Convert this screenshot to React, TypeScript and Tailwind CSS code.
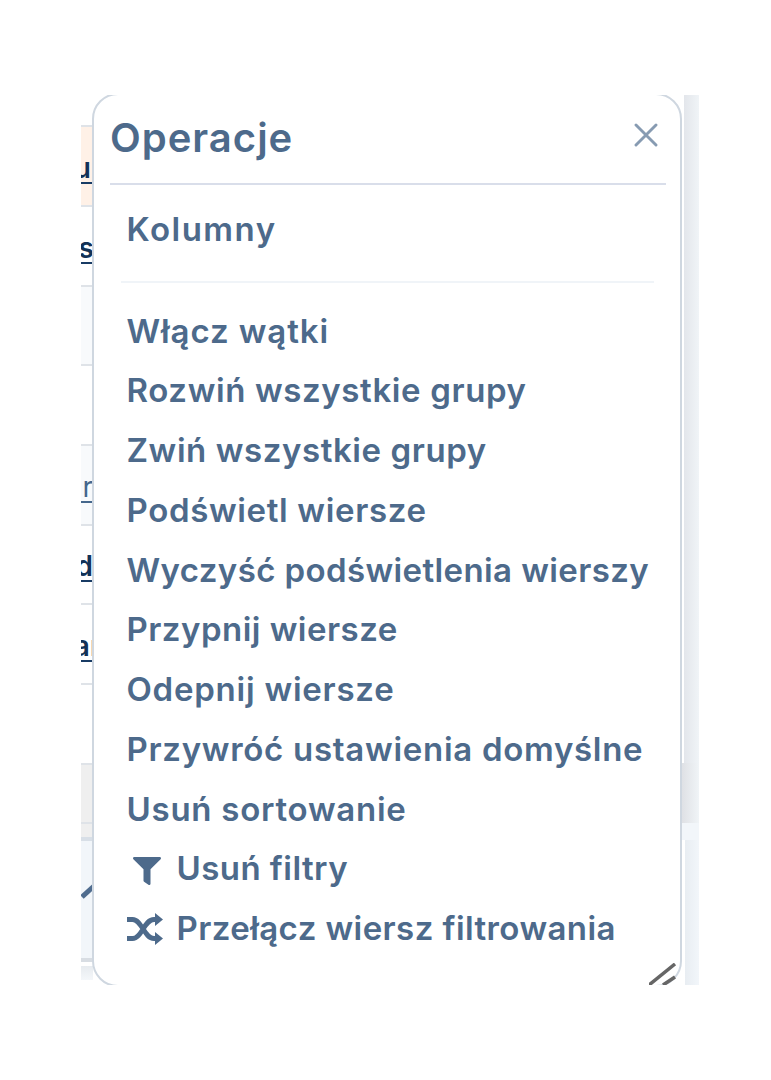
import React from "react";
import { FaFilter } from "react-icons/fa";
import clsx from "clsx";

const actions = [
  { label: "Włącz wątki", tracking: "tracking-[0.9px]" },
  { label: "Rozwiń wszystkie grupy", tracking: "tracking-[0.62px]" },
  { label: "Zwiń wszystkie grupy", tracking: "tracking-[0.58px]" },
  { label: "Podświetl wiersze", tracking: "tracking-[0.65px]" },
  { label: "Wyczyść podświetlenia wierszy", tracking: "tracking-[0.39px]" },
  { label: "Przypnij wiersze", tracking: "tracking-[0.48px]" },
  { label: "Odepnij wiersze", tracking: "tracking-[0.76px]" },
  { label: "Przywróć ustawienia domyślne", tracking: "tracking-[0.71px]" },
  { label: "Usuń sortowanie", tracking: "tracking-[0.75px]" },
  { label: "Usuń filtry", tracking: "tracking-[0.45px]", icon: "filter" },
  { label: "Przełącz wiersz filtrowania", tracking: "tracking-[0.42px]", icon: "shuffle" },
];

// Table rows, cut off by the panel
const rows = [
  { style: "h-[32px] bg-white" },
  { style: "h-[80px] bg-[#fff1e7]", text: "u", bold: true, shift: "mr-[2px]" },
  { style: "h-[80px] bg-white", text: "s", bold: true, shift: "mr-[-1px]" },
  { style: "h-[79px] bg-[#f8fafc]" },
  { style: "h-[80px] bg-white" },
  { style: "h-[80px] bg-[#f8fafc]", text: "r", shift: "mr-0" },
  { style: "h-[79px] bg-white", text: "d", bold: true, shift: "mr-0" },
  { style: "h-[80px] bg-white", text: "ar", bold: true, shift: "mr-[-8px]" },
  { style: "h-[80px] bg-white" },
  { style: "h-[59px] bg-[#efefef]" },
];

const ShuffleIcon = () => (
  <svg viewBox="0 0 36 32" className="h-[32px] w-[36px]" fill="none">
    <path
      d="M0 6.5H5.5C15 6.5 17 25.5 27 25.5H29M0 25.5H5.5C15 25.5 17 6.5 27 6.5H29"
      stroke="currentColor"
      strokeWidth="4.8"
    />
    <path d="M28 0L36 6.5L28 13ZM28 19L36 25.5L28 32Z" fill="currentColor" />
  </svg>
);

const TableEdge = () => (
  <div className="w-[12px] shrink-0 overflow-hidden bg-white">
    {rows.map((row, index) => (
      <div
        key={index}
        className={clsx(
          "flex items-center overflow-hidden border-b-2 border-[#dfe3e8]",
          row.style
        )}
      >
        {row.text && (
          <span
            className={clsx(
              "mt-[3px] flex h-[32px] w-full justify-end border-b-2 text-[28px] leading-[33px]",
              row.bold
                ? "border-[#183b64] font-semibold text-[#123257]"
                : "border-[#45678c] text-[#45678c]"
            )}
          >
            <span className={row.shift}>{row.text}</span>
          </span>
        )}
      </div>
    ))}
    <div className="h-[17px] border-b-4 border-[#d8dfe7] bg-[#efefef]" />
    <div className="flex h-[121px] items-center border-b-4 border-[#d8dde3] bg-[#f2f6fa]">
      <svg viewBox="0 0 12 16" className="mt-[-18px] h-[16px] w-[12px]" fill="none">
        <path d="M1 14L13 3" stroke="#506d8f" strokeWidth="5" />
      </svg>
    </div>
    <div className="mt-[4px] h-[14px] bg-linear-to-b from-[#e7ebef] to-[#f4f7fa]" />
  </div>
);

const App = () => {
  return (
    <div className="h-[1080px] w-[771px] bg-white pt-[95px] pl-[81px] font-['Inter',sans-serif] text-[#4d6a8b]">
      <div className="flex h-[890px] w-[618px] overflow-hidden">
        <TableEdge />
        {/* Operations panel */}
        <div className="relative mt-[-2px] ml-[-1px] h-[894px] w-[590px] shrink-0 rounded-[26px] border-2 border-[#cfd7e0] bg-white pt-px pr-[14px] pl-[16px]">
          <div className="flex h-[89px] justify-between border-b-2 border-[#d9deea]">
            <h1 className="pt-[18px] text-[40px] leading-[48px] font-semibold tracking-[1px] whitespace-nowrap">
              Operacje
            </h1>
            <svg viewBox="0 0 24 24" className="mt-[27px] mr-[8px] h-[24px] w-[24px]">
              <path
                d="M2 2L22 22M22 2L2 22"
                stroke="#879bb2"
                strokeWidth="2.9"
                strokeLinecap="round"
              />
            </svg>
          </div>
          <div className="mr-[12px] ml-[11px] h-[98px] border-b-2 border-[#f0f4f8] pt-[14px] pl-[5.5px] text-[33px] leading-[60px] font-semibold tracking-[1.5px]">
            Kolumny
          </div>
          <ul className="pt-[18.5px] pl-[16.5px] text-[33px] font-semibold">
            {actions.map((action) => (
              <li
                key={action.label}
                className="flex h-[59.75px] items-center whitespace-nowrap"
              >
                {action.icon && (
                  <span className="flex w-[50px] shrink-0">
                    {action.icon === "filter" ? (
                      <FaFilter className="mt-[3px] ml-[6px] text-[28px]" />
                    ) : (
                      <ShuffleIcon />
                    )}
                  </span>
                )}
                <span className={action.tracking}>{action.label}</span>
              </li>
            ))}
          </ul>
          {/* Resize handle */}
          <svg
            viewBox="0 0 28 22"
            className="absolute right-[3px] bottom-0 h-[22px] w-[28px]"
            fill="none"
          >
            <path d="M0 22L26 1M14 22L26 14" stroke="#666" strokeWidth="3.5" />
          </svg>
        </div>
        {/* Scrollbar side */}
        <div className="flex grow flex-col">
          <div className="h-[668px] border-l-2 border-white bg-linear-to-r from-[#e3e6eb] to-[#f0f4f7]" />
          <div className="h-[60px] bg-linear-to-r from-[#dfe1e5] to-[#f0f4f7]" />
          <div className="h-[17px] bg-[#f2f6fa]" />
          <div className="grow border-l-3 border-white bg-linear-to-r from-[#e8edf2] to-[#f2f6fa]" />
        </div>
      </div>
    </div>
  );
};

export default App;
